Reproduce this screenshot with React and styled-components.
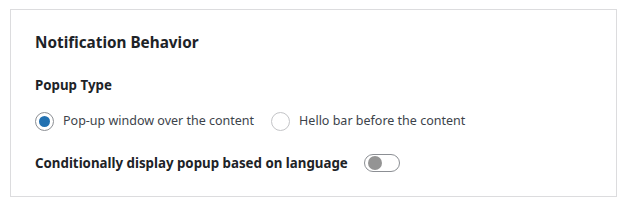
import React from "react";
import styled, { createGlobalStyle } from "styled-components";

const GlobalStyle = createGlobalStyle`
  html, body {
    margin: 0;
    padding: 0;
    background: #ffffff;
  }
  body {
    font-family: "Noto Sans", "Open Sans", sans-serif;
    color: #1d2327;
  }
`;

const Page = styled.div`
  padding: 9px 10px 11px 10px;
`;

const Card = styled.section`
  border: 1px solid #dcdcde;
  background: #fff;
  padding: 22px 24px 0 24px;
  height: 188px;
  box-sizing: border-box;
  width: 607px;
`;

const Title = styled.h2`
  margin: 0;
  font-size: 15.3px;
  font-weight: 700;
  line-height: 20px;
  color: #1d2327;
`;

const FieldLabel = styled.div`
  margin-top: 24px;
  font-size: 13.3px;
  font-weight: 700;
  line-height: 18px;
  color: #1d2327;
`;

const RadioRow = styled.div`
  display: flex;
  align-items: center;
  gap: 17px;
  margin-top: 17px;
`;

const RadioOption = styled.label`
  display: flex;
  align-items: center;
  gap: 9px;
  font-size: 12.5px;
  line-height: 20px;
  color: #3c434a;
`;

const RadioCircle = styled.span`
  width: 19px;
  height: 19px;
  box-sizing: border-box;
  border-radius: 50%;
  border: 1px solid ${({ checked }) => (checked ? "#8c8f94" : "#c3c4c7")};
  background: #fff;
  display: flex;
  align-items: center;
  justify-content: center;
  flex-shrink: 0;

  &::after {
    content: "";
    width: 11px;
    height: 11px;
    border-radius: 50%;
    background: #2271b1;
    display: ${({ checked }) => (checked ? "block" : "none")};
  }
`;

const ToggleRow = styled.div`
  display: flex;
  align-items: center;
  gap: 16px;
  margin-top: 23px;
  font-size: 13.3px;
  font-weight: 700;
  line-height: 18px;
  color: #1d2327;
`;

const Switch = styled.span`
  width: 28px;
  height: 16px;
  border: 1px solid #8c8f94;
  border-radius: 10px;
  display: flex;
  align-items: center;
  padding: 0 3px;
  box-sizing: content-box;

  &::before {
    content: "";
    width: 14px;
    height: 14px;
    border-radius: 50%;
    background: #949494;
  }
`;

export default function App() {
  return (
    <>
      <GlobalStyle />
      <Page>
        <Card>
          <Title>Notification Behavior</Title>
          <FieldLabel>Popup Type</FieldLabel>
          <RadioRow>
            <RadioOption>
              <RadioCircle checked />
              Pop-up window over the content
            </RadioOption>
            <RadioOption>
              <RadioCircle />
              Hello bar before the content
            </RadioOption>
          </RadioRow>
          <ToggleRow>
            Conditionally display popup based on language
            <Switch />
          </ToggleRow>
        </Card>
      </Page>
    </>
  );
}
